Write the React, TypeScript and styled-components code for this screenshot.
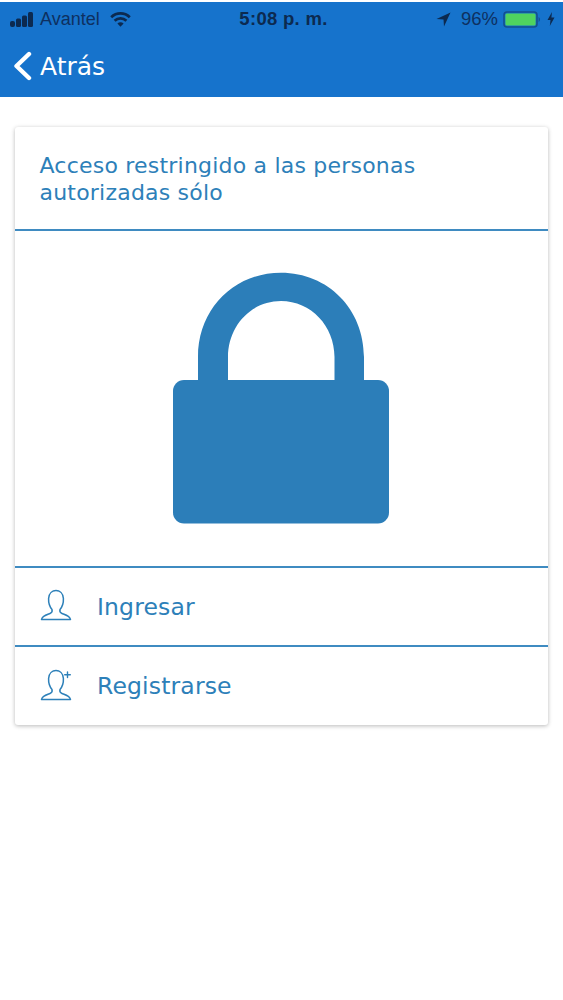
import React from "react";
import styled, { createGlobalStyle } from "styled-components";

const Global = createGlobalStyle`
  html, body { margin: 0; padding: 0; background: #fff; }
  body { font-family: "DejaVu Sans", sans-serif; }
`;

const Page = styled.div`
  width: 563px;
  height: 1000px;
  overflow: hidden;
  background: #fff;
  padding-top: 2px;
  box-sizing: border-box;
`;

const Header = styled.header`
  height: 95px;
  background: #1673cc;
  display: flex;
  flex-direction: column;
`;

const StatusBar = styled.div`
  height: 34px;
  padding: 0 8px 0 10px;
  display: grid;
  grid-template-columns: 1fr auto 1fr;
  align-items: center;
  color: #0e3060;
  font-family: "Liberation Sans", sans-serif;
  font-size: 18px;
`;

const StatusGroup = styled.div`
  display: flex;
  align-items: center;
`;

const RightGroup = styled(StatusGroup)`
  justify-content: flex-end;
`;

const CarrierName = styled.span`
  margin: 0 10px 0 6px;
`;

const Percent = styled.span`
  font-size: 18.5px;
  margin: 0 5px 0 10px;
`;

const BatteryGap = styled.span`
  width: 6px;
`;

const Time = styled.span`
  font-weight: 700;
  font-size: 18.5px;
  color: #0c2a50;
  letter-spacing: 0.3px;
  padding-left: 2px;
`;

const BackRow = styled.div`
  display: flex;
  align-items: center;
  gap: 8px;
  height: 44px;
  margin-top: 8px;
  padding-left: 13px;
  color: #fff;
  font-size: 25px;
`;

const Card = styled.section`
  margin: 30px 15px 0;
  background: #fff;
  border-radius: 3px;
  box-shadow: 0 1px 4px rgba(0, 0, 0, 0.28);
`;

const Title = styled.div`
  height: 102px;
  box-sizing: border-box;
  padding: 25px 20px 0 24.5px;
  font-size: 22px;
  letter-spacing: 0.21px;
  line-height: 27px;
  color: #2d80b9;
`;

const LockArea = styled.div`
  height: 339px;
  padding: 0 2px 1px 0;
  border-top: 2px solid #3f8bc1;
  border-bottom: 2px solid #3f8bc1;
  box-sizing: border-box;
  display: flex;
  align-items: center;
  justify-content: center;
`;

const Row = styled.div<{ $divider?: boolean }>`
  height: ${(p) => (p.$divider ? "79px" : "78px")};
  box-sizing: border-box;
  display: flex;
  align-items: center;
  padding-left: 25px;
  gap: 25px;
  font-size: 23.5px;
  letter-spacing: 0.15px;
  color: #2d80b9;
  border-bottom: ${(p) => (p.$divider ? "2px solid #3f8bc1" : "none")};
`;

const UserIcon = styled.svg`
  margin-top: -3px;
`;

const Signal = () => (
  <svg width="24" height="15" viewBox="0 0 24 15" fill="#0c2a50">
    <rect x="0" y="9" width="5" height="6" rx="2" />
    <rect x="6" y="6.5" width="5" height="8.5" rx="1.5" />
    <rect x="12" y="3.5" width="5" height="11.5" rx="1.5" />
    <rect x="18" y="0" width="5" height="15" rx="1.5" />
  </svg>
);

const Wifi = () => (
  <svg width="21" height="15" viewBox="0 0 21 15" fill="none" stroke="#0c2a50" strokeWidth="2.8">
    <path d="M1.2 5.2 C6.5 0.2 14.5 0.2 19.8 5.2" />
    <path d="M4.6 8.8 C8 5.6 13 5.6 16.4 8.8" />
    <path d="M10.5 14.8 L7.4 11.4 C9.3 10 11.7 10 13.6 11.4 Z" fill="#0c2a50" stroke="none" />
  </svg>
);

const Arrow = () => (
  <svg width="15" height="15" viewBox="0 0 15 15" fill="#0c2a50">
    <path d="M14.5 0.5 L0.5 7 L7.5 7.5 L8 14.5 Z" />
  </svg>
);

const Battery = () => (
  <svg width="38" height="17" viewBox="0 0 38 17">
    <rect x="1" y="1" width="33" height="15" rx="3" fill="none" stroke="#14508f" strokeWidth="1.6" />
    <rect x="2.4" y="2.4" width="30.2" height="12.2" rx="1.5" fill="#4fd35f" />
    <path d="M35.6 6 C37.4 6.8 37.4 10.2 35.6 11 Z" fill="#14508f" />
  </svg>
);

const Bolt = () => (
  <svg width="8" height="14" viewBox="0 0 8 14" fill="#0c2a50">
    <path d="M5 0 L0.5 8 L3.5 8 L2.8 14 L7.5 5.6 L4.4 5.6 Z" />
  </svg>
);

const Chevron = () => (
  <svg width="19" height="30" viewBox="0 0 19 30" fill="none" stroke="#fff" strokeWidth="4.4" strokeLinecap="round" strokeLinejoin="round">
    <path d="M16 3 L3.5 15 L16 27" />
  </svg>
);

const Lock = () => (
  <svg width="216" height="252" viewBox="0 0 216 252">
    <path
      d="M25 110 V85 C25 37 61 0.7 108 0.7 C155 0.7 191 37 191 85 V110 H161.5 V85 C161.5 54 138 29 108 29 C78 29 55 54 55 85 V110 Z"
      fill="#2c7eb9"
    />
    <rect x="0" y="108" width="216" height="143.5" rx="11" fill="#2c7eb9" />
  </svg>
);

const User = ({ plus }: { plus?: boolean }) => (
  <UserIcon width="32" height="32" viewBox="0 0 32 32" fill="none" stroke="#2d80b9" strokeWidth="1.5" strokeLinejoin="round" strokeLinecap="round">
    <path d="M1.5 30.5 H30.5 C30 27 26 26 22 24.5 C20 23.7 19.6 22 20 20.5 C22.5 17.5 23.6 14 23.4 9.5 C23.1 4 19.5 1.5 16 1.5 C12.5 1.5 8.9 4 8.6 9.5 C8.4 14 9.5 17.5 12 20.5 C12.4 22 12 23.7 10 24.5 C6 26 2 27 1.5 30.5 Z" />
    {plus && <path d="M27.5 3 V8.5 M24.7 5.7 H30.3" strokeWidth="1.4" />}
  </UserIcon>
);

export default function App() {
  return (
    <Page>
      <Global />
      <Header>
        <StatusBar>
          <StatusGroup>
            <Signal />
            <CarrierName>Avantel</CarrierName>
            <Wifi />
          </StatusGroup>
          <Time>5:08 p. m.</Time>
          <RightGroup>
            <Arrow />
            <Percent>96%</Percent>
            <Battery />
            <BatteryGap />
            <Bolt />
          </RightGroup>
        </StatusBar>
        <BackRow>
          <Chevron />
          <span>Atrás</span>
        </BackRow>
      </Header>
      <Card>
        <Title>Acceso restringido a las personas autorizadas sólo</Title>
        <LockArea>
          <Lock />
        </LockArea>
        <Row $divider>
          <User />
          <span>Ingresar</span>
        </Row>
        <Row>
          <User plus />
          <span>Registrarse</span>
        </Row>
      </Card>
    </Page>
  );
}
